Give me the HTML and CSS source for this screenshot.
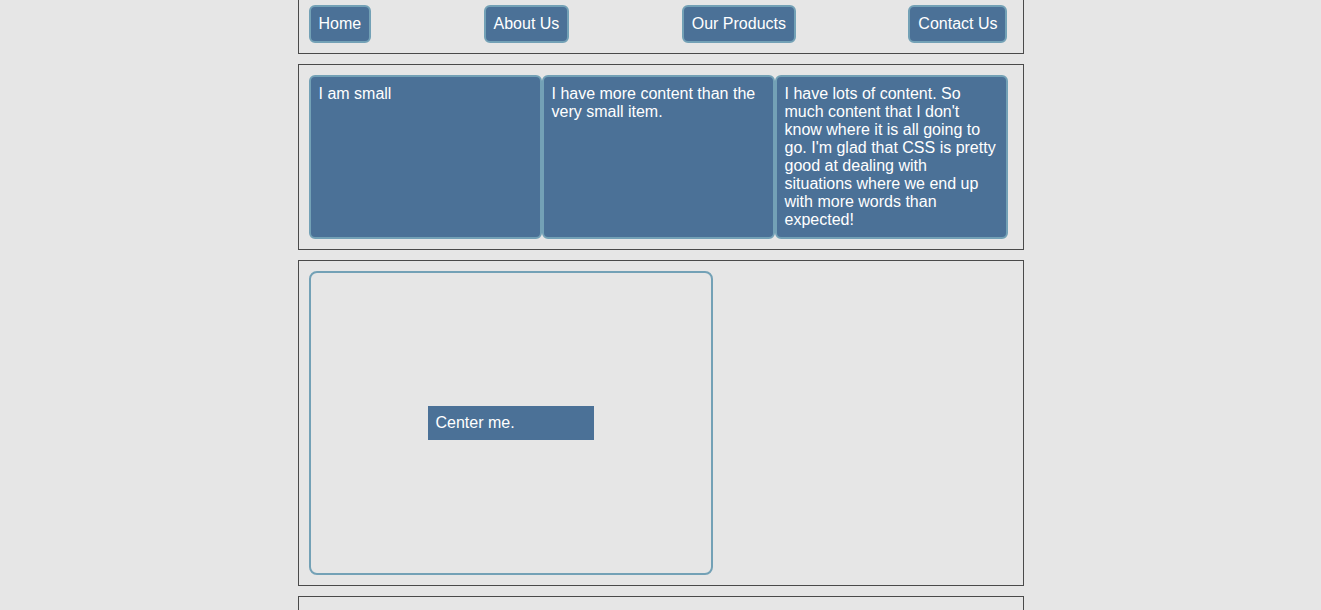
FILE: index.html
```html
<!DOCTYPE html>
<html lang="en">
<head>
    <meta charset="UTF-8">
    <meta name="viewport" content="width=device-width, initial-scale=1.0">
    <title>Flexbox and Grid</title>
    <link rel="stylesheet" href="styles.css">
</head>
<body>
    <div class="page">
        <div class="wrapper">
            <ul class="nav">
                <li>Home</li>
                <li>About Us</li>
                <li>Our Products</li>
                <li>Contact Us</li>
            </ul>
        </div>

        <div class="wrapper">
            <div class="cards">
                <div class="item">I am small</div>
                <div class="item">I have more content than the very small item.</div>
                <div class="item">I have lots of content. So much content that I don't know where it is all going to go. I'm glad that CSS is pretty good at dealing with situations where we end up with more words than expected!</div>
            </div>
        </div>

        <div class="wrapper">
            <div class="center-box">
                <div class="center-me">Center me.</div>
            </div>
        </div>

        <div class="wrapper">
            <div class="empty"></div>
        </div>
    </div>
</body>
</html>
```

FILE: styles.css
```css
* {
    margin: 0;
    padding: 0;
    box-sizing: border-box;
}
body {
    font-family: "Liberation Sans", Arial, sans-serif;
    font-size: 16px;
    background: #e6e6e6;
    color: #fff;
}
.page {
    margin-top: -6px;
}
.wrapper {
    width: 726px;
    margin: 0 auto 10px;
    padding: 10px 15px 10px 10px;
    border: 1px solid #4a4a4a;
}
.nav {
    list-style: none;
    display: flex;
    justify-content: space-between;
}
.nav li {
    padding: 8px;
    background: #4b7197;
    border: 2px solid #73a1b6;
    border-radius: 6px;
}
.cards {
    display: grid;
    grid-template-columns: repeat(3, 1fr);
}
.item {
    padding: 8px;
    background: #4b7197;
    border: 2px solid #73a1b6;
    border-radius: 6px;
}
.center-box {
    width: 404px;
    height: 304px;
    border: 2px solid #73a1b6;
    border-radius: 8px;
    display: flex;
    align-items: center;
    justify-content: center;
}
.center-me {
    width: 166px;
    padding: 8px;
    background: #4b7197;
}
.empty {
    height: 100px;
}
```
